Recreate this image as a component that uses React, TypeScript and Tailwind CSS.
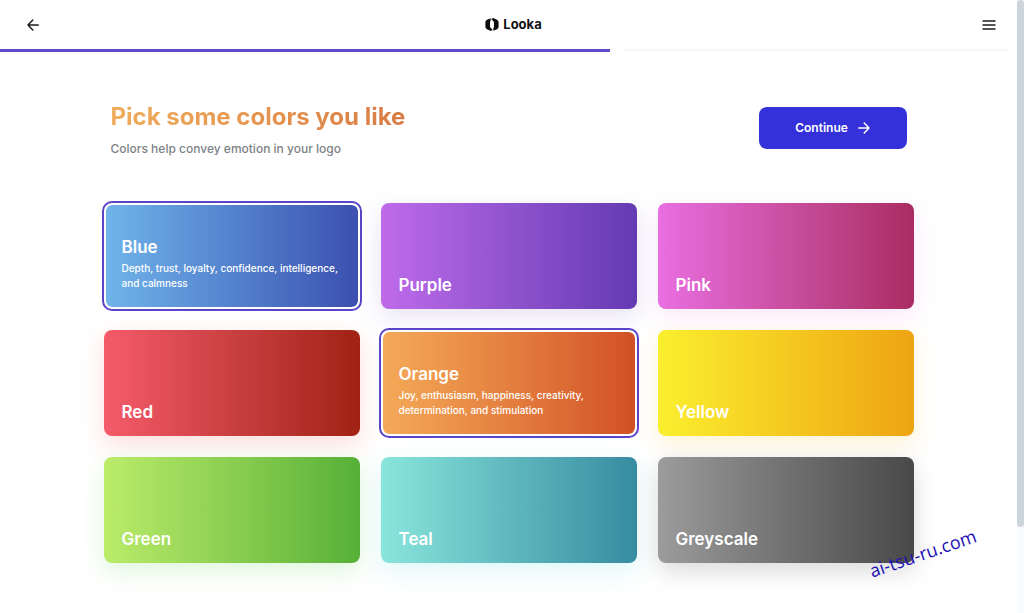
import { useState } from "react";

type Swatch = {
  name: string;
  mood: string;
  fill: string;
  glow: string;
};

const swatches: Swatch[] = [
  { name: "Blue", mood: "Depth, trust, loyalty, confidence, intelligence, and calmness", fill: "from-[#70b4ea] to-[#3c50b0]", glow: "shadow-[#3c50b0]/10" },
  { name: "Purple", mood: "Royalty, mystery, luxury, and creativity", fill: "from-[#bf6bea] to-[#643ab2]", glow: "shadow-[#643ab2]/15" },
  { name: "Pink", mood: "Love, compassion, and playfulness", fill: "from-[#e96ee2] to-[#aa2c62]", glow: "shadow-[#e96ee2]/15" },
  { name: "Red", mood: "Energy, passion, and strength", fill: "from-[#f55b6a] to-[#a02212]", glow: "shadow-[#f55b4a]/20" },
  { name: "Orange", mood: "Joy, enthusiasm, happiness, creativity, determination, and stimulation", fill: "from-[#f4aa58] to-[#d15026]", glow: "shadow-[#d15026]/10" },
  { name: "Yellow", mood: "Warmth, optimism, and cheer", fill: "from-[#f9ef2e] to-[#eea412]", glow: "shadow-[#f4c020]/20" },
  { name: "Green", mood: "Growth, harmony, and nature", fill: "from-[#bbec6a] to-[#55b037]", glow: "shadow-[#55d047]/20" },
  { name: "Teal", mood: "Clarity, calm, and balance", fill: "from-[#8ae6dc] to-[#368ca0]", glow: "shadow-[#60d6dc]/20" },
  { name: "Greyscale", mood: "Neutral, timeless, and practical", fill: "from-[#9c9c9c] to-[#494949]", glow: "shadow-black/15" },
];

function LookaMark() {
  return (
    <svg viewBox="0 0 28 26" className="h-[13px] w-[14px]" fill="#0c0c0e" aria-hidden="true">
      <path d="M11 0.500 3 4 0.800 7.500v11L3 22l8.500 3.800 4-2L10 18V7l1.500-1Z" />
      <path d="M17 25.500 25 22l2.200-3.500v-11L25 4 16.500 0.200l-4 2L18 8v11l-1.500 1Z" />
    </svg>
  );
}

function Arrow({ back = false }: { back?: boolean }) {
  return (
    <svg
      viewBox="0 0 12 12"
      className="size-3"
      fill="none"
      stroke="currentColor"
      strokeWidth="1.500"
      strokeLinecap="round"
      strokeLinejoin="round"
      aria-hidden="true"
    >
      <path d={back ? "M11.300 6H1M5.800 1 1 6l4.800 5" : "M0.700 6H11M6.200 1 11 6l-4.800 5"} />
    </svg>
  );
}

function Header() {
  return (
    <header>
      <div className="grid h-[49px] grid-cols-3 items-center pr-[21px] pl-[27px]">
        <button type="button" aria-label="Back" className="justify-self-start text-[#1c1c1c]">
          <Arrow back />
        </button>
        <a href="#home" className="flex items-center gap-1 justify-self-center pl-1 text-[13px] font-bold text-[#111114]">
          <LookaMark />
          Looka
        </a>
        <button type="button" aria-label="Menu" className="justify-self-end text-[#1c1c1c]">
          <svg viewBox="0 0 14 10" className="h-[10px] w-[14px]" stroke="currentColor" strokeWidth="1.400" aria-hidden="true">
            <path d="M0.500 1h13M0.500 5h13M0.500 9h13" />
          </svg>
        </button>
      </div>
      <div className="flex gap-3.5 pr-2">
        <div className="h-[3px] w-[60.500%] bg-[#5f4cc9]" />
        <div className="h-0.5 flex-1 bg-[#f7f7f8]" />
      </div>
    </header>
  );
}

function ColorCard({ swatch, selected, onToggle }: { swatch: Swatch; selected: boolean; onToggle: () => void }) {
  return (
    <button
      type="button"
      aria-pressed={selected}
      onClick={onToggle}
      className={`flex h-[106px] flex-col justify-end rounded-lg bg-linear-to-r px-4 text-left text-white ${swatch.fill} ${
        selected
          ? "border-2 border-white bg-clip-padding pb-4 outline-2 outline-[#5a45c8]"
          : `border-2 border-transparent bg-origin-border pb-2.5 shadow-[0_8px_24px] ${swatch.glow}`
      }`}
    >
      <span className="text-[17px] leading-6 font-semibold">{swatch.name}</span>
      {selected && <span className="mt-0.5 text-[10px] leading-[15px] font-medium">{swatch.mood}</span>}
    </button>
  );
}

export default function App() {
  const [picked, setPicked] = useState<string[]>(["Blue", "Orange"]);
  const toggle = (name: string) =>
    setPicked((now) => (now.includes(name) ? now.filter((n) => n !== name) : [...now, name]));

  return (
    <div className="relative flex min-h-screen bg-white font-['Inter',sans-serif]">
      <div className="min-w-0 flex-1">
        <Header />
        <main className="mx-auto max-w-[810px] pt-[49px] pb-12">
          <div className="flex items-start justify-between px-[7px]">
            <div>
              <h1 className="w-fit bg-linear-to-r from-[#efad5c] to-[#d97c45] bg-clip-text text-[24px] leading-8 font-bold text-transparent">
                Pick some colors you like
              </h1>
              <p className="mt-1.5 text-[12px] leading-5 font-medium text-[#7c8286]">Colors help convey emotion in your logo</p>
            </div>
            <button
              type="button"
              className="mt-1.5 flex h-[42px] w-[148px] items-center justify-center gap-2.5 rounded-lg bg-[#3431da] text-[12px] font-semibold text-white"
            >
              Continue
              <Arrow />
            </button>
          </div>
          <div className="mt-11 grid grid-cols-3 gap-[21px]">
            {swatches.map((swatch) => (
              <ColorCard
                key={swatch.name}
                swatch={swatch}
                selected={picked.includes(swatch.name)}
                onToggle={() => toggle(swatch.name)}
              />
            ))}
          </div>
        </main>
      </div>
      <div className="w-[7px] bg-[#fafbfc]" aria-hidden="true">
        <div className="h-[86%] rounded-full bg-[#ccd4dc]" />
      </div>
      <span className="absolute right-[46px] bottom-[48px] -rotate-[19deg] font-['Open_Sans',sans-serif] text-[18px] leading-6 text-[#1d0fb4]">
        ai-tsu-ru.com
      </span>
    </div>
  );
}
